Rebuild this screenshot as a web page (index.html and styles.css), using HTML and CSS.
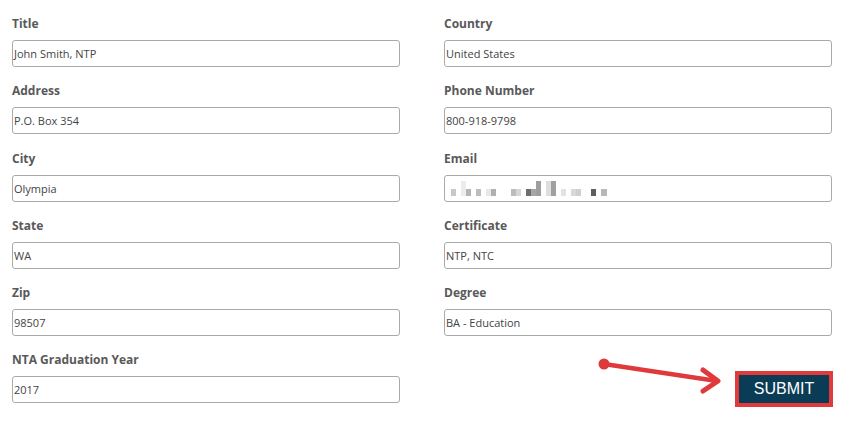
FILE: index.html
```html
<!DOCTYPE html>
<html>
<head>
<meta charset="utf-8">
<link rel="stylesheet" href="styles.css">
</head>
<body>
<div class="form">
  <div class="field"><label class="lbl">Title</label><div class="inp">John Smith, NTP</div></div>
  <div class="field"><label class="lbl">Country</label><div class="inp">United States</div></div>
  <div class="field"><label class="lbl">Address</label><div class="inp">P.O. Box 354</div></div>
  <div class="field"><label class="lbl">Phone Number</label><div class="inp">800-918-9798</div></div>
  <div class="field"><label class="lbl">City</label><div class="inp">Olympia</div></div>
  <div class="field"><label class="lbl">Email</label>
    <div class="inp blur">
      <span class="px" style="margin-left:5px;width:5px;height:7px;background:#c8c8c8"></span>
      <span class="px" style="margin-left:5px;width:5px;height:15px;background:#ececec"></span>
      <span class="px" style="width:5px;height:7px;background:#b4b4b4"></span>
      <span class="px" style="margin-left:5px;width:5px;height:7px;background:#bdbdbd"></span>
      <span class="px" style="margin-left:5px;width:5px;height:7px;background:#e8e8e8"></span>
      <span class="px" style="width:5px;height:7px;background:#b0b0b0"></span>
      <span class="px" style="margin-left:15px;width:5px;height:7px;background:#bcbcbc"></span>
      <span class="px" style="width:5px;height:7px;background:#d6d6d6"></span>
      <span class="px" style="margin-left:5px;width:5px;height:7px;background:#6e6e6e"></span>
      <span class="px" style="width:5px;height:7px;background:#a6a6a6"></span>
      <span class="px" style="width:5px;height:15px;background:#9e9e9e"></span>
      <span class="px" style="margin-left:5px;width:5px;height:15px;background:#dedede"></span>
      <span class="px" style="width:5px;height:15px;background:#a0a0a0"></span>
      <span class="px" style="margin-left:5px;width:5px;height:7px;background:#e2e2e2"></span>
      <span class="px" style="margin-left:5px;width:5px;height:7px;background:#d8d8d8"></span>
      <span class="px" style="width:5px;height:7px;background:#cfcfcf"></span>
      <span class="px" style="margin-left:10px;width:5px;height:7px;background:#5e5e5e"></span>
      <span class="px" style="margin-left:5px;width:6px;height:7px;background:#b8b8b8"></span>
    </div>
  </div>
  <div class="field"><label class="lbl">State</label><div class="inp">WA</div></div>
  <div class="field"><label class="lbl">Certificate</label><div class="inp">NTP, NTC</div></div>
  <div class="field"><label class="lbl">Zip</label><div class="inp">98507</div></div>
  <div class="field"><label class="lbl">Degree</label><div class="inp">BA - Education</div></div>
  <div class="field"><label class="lbl">NTA Graduation Year</label><div class="inp">2017</div></div>
  <div class="field submit-cell">
    <svg class="arrow" width="140" height="45" viewBox="0 0 140 45">
      <circle cx="13" cy="15" r="5.5" fill="#e0393b"/>
      <path d="M13 15 L126 32" stroke="#e0393b" stroke-width="4.5" stroke-linecap="round" fill="none"/>
      <path d="M112 21 L127 32 L112 42" stroke="#e0393b" stroke-width="5" stroke-linecap="round" stroke-linejoin="round" fill="none"/>
    </svg>
    <button class="submit">SUBMIT</button>
  </div>
</div>
</body>
</html>
```
FILE: styles.css
```css
html, body {
  margin: 0;
  padding: 0;
  background: #fff;
}
.form {
  display: grid;
  grid-template-columns: 388px 388px;
  column-gap: 44px;
  row-gap: 14.3px;
  padding: 14px 0 0 12px;
  font-family: "Open Sans", sans-serif;
}
.field {
  display: flex;
  flex-direction: column;
}
.lbl {
  font-size: 12px;
  font-weight: 700;
  color: #595959;
  line-height: 18px;
  height: 18px;
  padding-top: 1px;
  margin-bottom: 7px;
}
.inp {
  box-sizing: border-box;
  height: 27px;
  border: 1px solid #aaa;
  border-radius: 3px;
  padding: 0 0 0 1px;
  font-size: 11px;
  line-height: 25px;
  color: #444;
  background: #fff;
}
.blur {
  display: flex;
  align-items: flex-end;
  padding-bottom: 5px;
}
.px {
  display: block;
  flex: none;
}
.submit-cell {
  position: relative;
  align-items: flex-end;
  justify-content: flex-start;
  padding-top: 21px;
}
.arrow {
  position: absolute;
  left: 147px;
  top: -1px;
}
.submit {
  box-sizing: border-box;
  width: 98px;
  height: 36px;
  border: 4px solid #e03a3c;
  background: #0b3c56;
  color: #fff;
  font-family: "Liberation Sans", Arial, sans-serif;
  font-size: 16px;
  padding: 0;
  margin-right: -1px;
  cursor: pointer;
}
```
